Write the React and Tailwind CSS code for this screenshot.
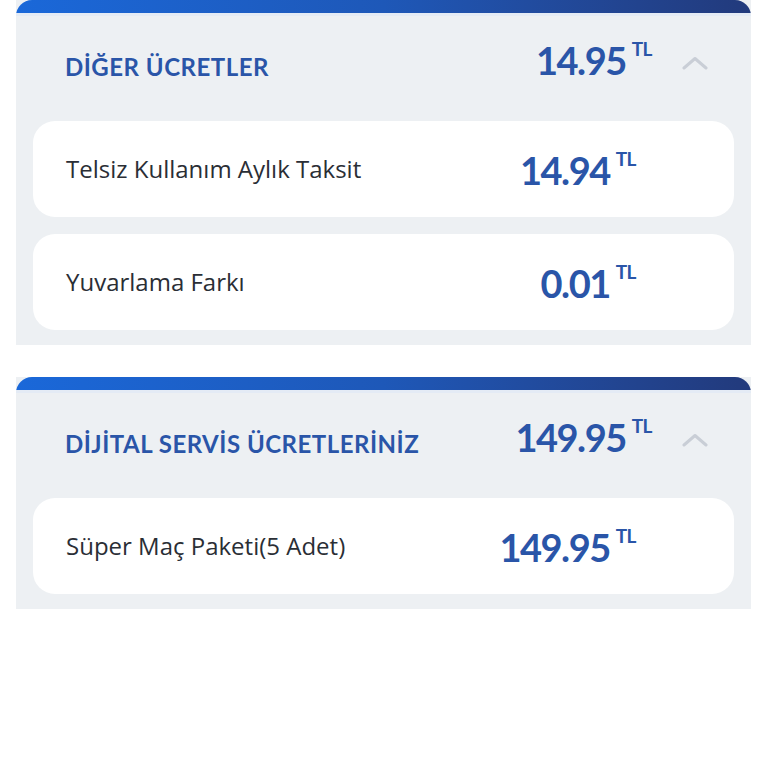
import React from "react";

const sections = [
  {
    title: "DİĞER ÜCRETLER",
    total: "14.95",
    items: [
      { name: "Telsiz Kullanım Aylık Taksit", amount: "14.94" },
      { name: "Yuvarlama Farkı", amount: "0.01" },
    ],
  },
  {
    title: "DİJİTAL SERVİS ÜCRETLERİNİZ",
    total: "149.95",
    items: [{ name: "Süper Maç Paketi(5 Adet)", amount: "149.95" }],
  },
];

function Amount({ value }) {
  return (
    <div className="flex items-start text-[#2a55a8] font-bold">
      <span className="text-[38px] leading-[44px] tracking-[-1.5px]">{value}</span>
      <span className="ml-[6px] mt-[1px] text-[19px] leading-[20px] tracking-[-0.5px]">TL</span>
    </div>
  );
}

function Chevron() {
  return (
    <svg width="26" height="16" viewBox="0 0 26 16" fill="none">
      <path d="M2 13 L13 3.5 L24 13" stroke="#c9ced6" strokeWidth="3" strokeLinecap="round" strokeLinejoin="round" />
    </svg>
  );
}

function Section({ section }) {
  return (
    <div className="mx-[16px] w-[735px] bg-[#edf0f3]">
      <div className="h-[16px] rounded-t-[16px] bg-gradient-to-r from-[#1a68d9] via-[#1e58b8] to-[#223a7c] border-b-[3px] border-[#e4ebf5]" />
      <div className="flex items-center h-[105px] pl-[49px] pr-[43px]">
        <div className="flex-1 text-[24px] font-bold tracking-[0.5px] text-[#2a55a8] -mt-[4px]">{section.title}</div>
        <div className="mr-[30px] -mt-[18px]">
          <Amount value={section.total} />
        </div>
        <div className="-mt-[12px]">
          <Chevron />
        </div>
      </div>
      <div className="flex flex-col gap-[17px] px-[17px] pb-[15px]">
        {section.items.map((it) => (
          <div key={it.name} className="flex items-center h-[96px] rounded-[22px] bg-white pl-[33px] pr-[98px]">
            <div className="flex-1 text-[24px] text-[#2a2e35]" style={{ fontFamily: "'Open Sans', sans-serif" }}>
              {it.name}
            </div>
            <div className="mt-[2px]">
              <Amount value={it.amount} />
            </div>
          </div>
        ))}
      </div>
    </div>
  );
}

export default function App() {
  return (
    <div className="w-[768px] h-[768px] bg-white flex flex-col gap-[32px]" style={{ fontFamily: "Lato, 'Noto Sans', sans-serif" }}>
      {sections.map((s) => (
        <Section key={s.title} section={s} />
      ))}
    </div>
  );
}
